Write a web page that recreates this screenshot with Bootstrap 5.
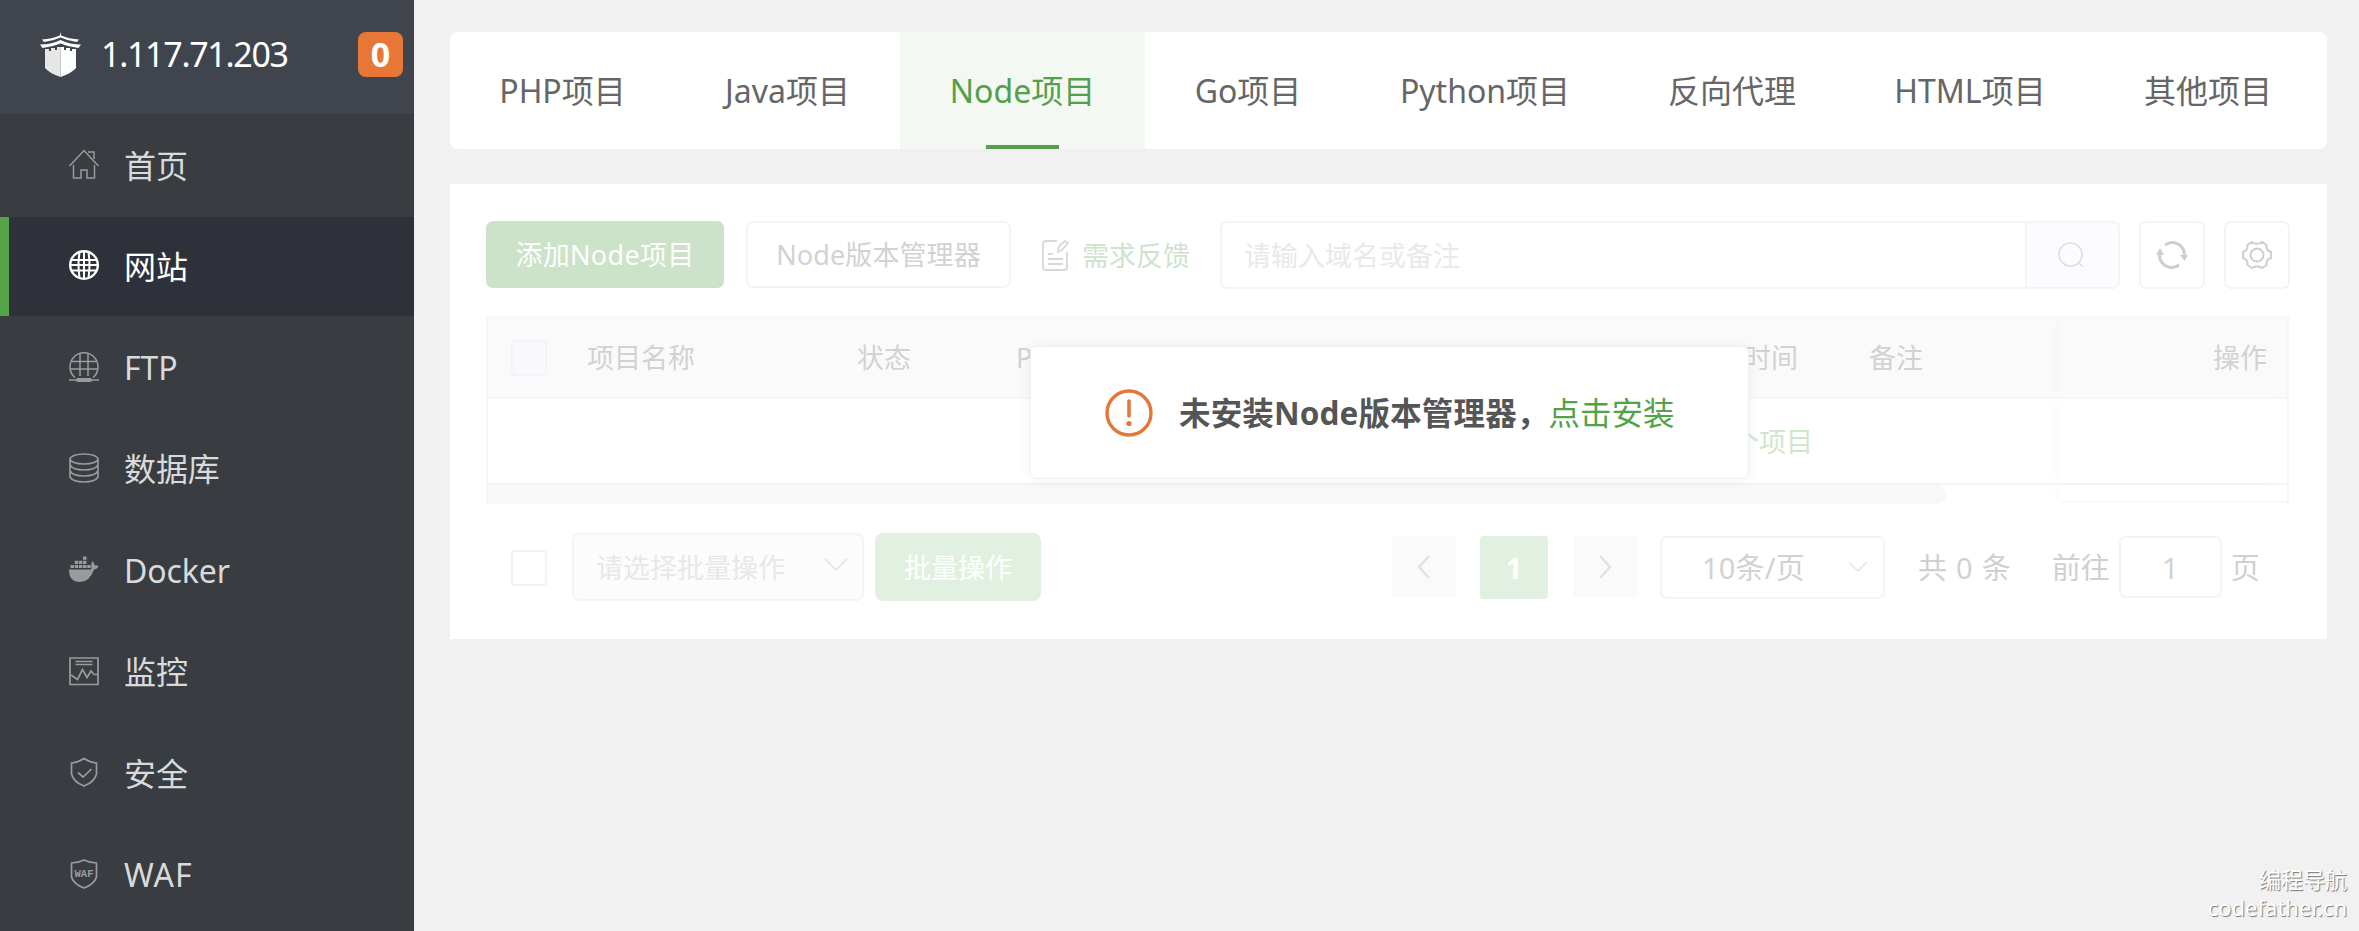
<!DOCTYPE html>
<html lang="zh-CN">
<head>
<meta charset="utf-8">
<title>网站 - Node项目</title>
<link href="https://cdn.jsdelivr.net/npm/bootstrap@5.3.0/dist/css/bootstrap.min.css" rel="stylesheet">
<style>
  body { font-family: "Noto Sans", "Noto Sans CJK SC", sans-serif; background: #f1f1f1; height: 931px; overflow: hidden; font-size: 27px; line-height: 1; }
  svg { display: block; flex: none; fill: none; stroke: currentColor; }
  svg.solid { stroke: none; fill: currentColor; }
  .side { width: 414px; height: 931px; background: #393d41; }
  .side-head { height: 115px; background: #40454d; border-bottom: 1px solid #383c42; padding: 0 11px 6px 40px; }
  .ip { font-size: 34px; letter-spacing: -1.3px; margin-left: 20px; }
  .msg { width: 45px; height: 45px; border-radius: 8px; background: #e87636; font-size: 34px; font-weight: 700; }
  .side .nav-link { height: 101.4px; padding: 0 0 0 69px; gap: 25px; color: #d8dadb; font-size: 32px; letter-spacing: -.1px; }
  .side .nav-link svg { color: #999c9e; margin-bottom: 3px; }
  .side .nav-link.wide { letter-spacing: 1px; }
  .side .nav-link.active { height: 99px; margin: 1px 0; padding-left: 60px; border-left: 9px solid #54a549; background: #2e3139; color: #fff; }
  .side .nav-link.active svg { color: #fff; }
  .main { width: 1877px; margin-left: 36px; padding-top: 32px; }
  .tabs { height: 117px; border-radius: 8px; background: #fff; overflow: hidden; margin-bottom: 35px; }
  .tabs a { color: #666; font-size: 32px; text-decoration: none; padding-top: 1px; }
  .tabs a.on { color: #549f4a; background: #f3f8f3; position: relative; }
  .tabs a.on::after { content: ""; position: absolute; left: 86px; bottom: 0; width: 73px; height: 4px; background: #549f4a; }
  .w225 { width: 225px; } .w226 { width: 226px; } .w245 { width: 245px; } .w206 { width: 206px; }
  .w268 { width: 268px; } .w250 { width: 250px; }
  .panel { position: relative; height: 455px; background: #fff; padding: 37px 36px 0; }
  .tools { height: 68px; }
  .bx { border: 2px solid #f4f4f4; border-radius: 7px; background: #fff; color: #d2d2d2; height: 67px; }
  .add { width: 238px; height: 67px; background: #cce2c9; color: #fff; border-radius: 7px; letter-spacing: .3px; }
  .ver { width: 265px; margin-left: 22px; letter-spacing: .1px; }
  .fb { margin-left: 31px; width: 178px; color: #cfe2cc; gap: 13px; }
  .fb svg { color: #d8d8d8; }
  .search { width: 900px; height: 68px; color: #e9e9e9; padding-left: 22px; overflow: hidden; }
  .search-btn { width: 93px; align-self: stretch; border-left: 2px solid #f4f4f6; background: #fcfcff; color: #dedee0; padding-right: 3px; }
  .sq { width: 66px; height: 68px; margin-left: 19px; color: #cecece; }
  .grid { width: 1803px; height: 188px; margin-top: 27px; border-left: 2px solid #f6f6f6; border-right: 2px solid #f6f6f6; border-top: 2px solid #f7f7f7; }
  .grid-head { height: 81px; background: #fafafa; border-bottom: 2px solid #f7f7f7; color: #d2d2d2; padding-top: 1px; }
  .cb { width: 36px; height: 36px; border: 2px solid #f3f3f3; border-radius: 4px; background: #fff; flex: none; }
  .grid-head .cb { background: #f8f8fd; border-color: #f4f4f8; margin: 0 40px 0 23px; }
  .c1 { width: 270px; } .c2 { width: 159px; } .c3 { width: 728px; } .c4 { width: 125px; } .c5 { width: 190px; }
  .fixcol { width: 228px; height: 100%; padding-right: 20px; box-shadow: -7px 0 9px -3px rgba(0,0,0,.02); }
  .grid-row { height: 87px; border-bottom: 2px solid #f4f4f4; color: #d0e6cc; padding-top: 1px; }
  .empty { width: 1571px; text-align: right; padding-right: 246px; }
  .bar { width: 1458px; height: 19px; border-radius: 0 9px 9px 0; background: #f8f8f8; }
  .bar-r { width: 228px; height: 18px; border-bottom: 2px solid #fafafa; }
  .foot { height: 70px; margin-top: 28px; padding-left: 25px; color: #d0d0d0; font-size: 29px; }
  .foot > .cb { margin-top: 2px; }
  .sel { width: 292px; height: 68px; margin-left: 25px; background: #fcfcfc; color: #e8e8e8; padding: 0 14px 0 22px; font-size: 27px; }
  .batch { width: 166px; height: 68px; border-radius: 8px; margin-left: 11px; background: #e2f0e1; color: #fff; font-size: 27px; }
  .page-set { margin-left: 351px; }
  .pg { width: 64px; height: 62px; background: #fafafa; border-radius: 3px; color: #dfdfdf; }
  .pg.on { width: 68px; height: 63px; background: #e2f0e1; color: #fff; font-weight: 700; margin: 0 25px 0 24px; }
  .size { width: 225px; height: 63px; margin-left: 23px; padding: 0 15px 0 40px; letter-spacing: .2px; }
  .size svg { color: #e4e4e4; }
  .jump { width: 103px; height: 62px; margin: 0 9px; }
  .total { margin-left: 33px; word-spacing: 1.5px; }
  .goto { margin-left: 41px; }
  .tip { position: absolute; left: 580px; top: 162px; width: 719px; height: 133px; background: #fff; border: 1px solid #f0f0f0; border-radius: 6px; box-shadow: 0 1px 14px rgba(0,0,0,.06); padding-left: 74px; font-size: 31.5px; color: #555; }
  .tip svg { color: #e5763a; }
  .tip a { color: #52a346; text-decoration: none; }
  .tip-text { margin-left: 26px; letter-spacing: .15px; }
  .mark-note { position: absolute; right: 12px; bottom: 10px; text-align: right; color: #fff; font-size: 22px; line-height: 28px; text-shadow: 1px 1px 1px #777; }
</style>
</head>
<body>
<div class="d-flex">
  <aside class="side flex-shrink-0">
    <div class="side-head d-flex align-items-center text-white">
      <svg class="solid" width="41" height="45" viewBox="0 0 41 45"><path d="M19.800 3.500 20.500 0l.7 3.500Q29 7 39 7.500L37 10Q28 9 20.500 5.500 13 9 4 10L2 7.500q10-.5 17.800-4Z"/><path d="M20.500 8Q30 12.500 41 12.500L38.500 16q-10-1-18-4.500Q12.500 15 2.500 16L0 12.500Q11 12.500 20.500 8Z"/><path fill="#e6e6e6" d="M5 17h4v2h2v-3h4v2h2v-3h3.500v30Q9 41 5 36Z"/><path d="M20.500 15H24v3h2v-2h4v3h2v-2h4v19q-4 5-15.500 9Z"/></svg>
      <span class="ip">1.117.71.203</span>
      <span class="msg d-flex align-items-center justify-content-center ms-auto">0</span>
    </div>
    <nav class="nav flex-column flex-nowrap">
      <a class="nav-link d-flex align-items-center" href="#"><svg width="30" height="30" viewBox="0 0 30 30" stroke-width="1.500"><path d="M.5 17 15 1.500 29.500 17M19 3h6v7M4.500 16v13H12v-8h6v8h7.500V16"/></svg>首页</a>
      <a class="nav-link active d-flex align-items-center" href="#"><svg width="30" height="30" viewBox="0 0 30 30" stroke-width="2.400"><circle cx="15" cy="15" r="13.800"/><path d="M10.500 2.500Q8.500 15 10.500 27.500M19.500 2.500Q21.500 15 19.500 27.500M15 1v28M2 10h26M1 15h28M2 20.500h26" stroke-width="2"/></svg>网站</a>
      <a class="nav-link d-flex align-items-center" href="#"><svg width="30" height="30" viewBox="0 0 30 30" stroke-width="1.500"><path d="M6 25.500A14 14 0 1 1 24 25.500M2.500 9.500h25M1 17h28M11 2v22M19 2v22M0 28h30"/><path d="M9 28h12" stroke-width="4" stroke-linecap="round"/></svg>FTP</a>
      <a class="nav-link d-flex align-items-center" href="#"><svg width="30" height="30" viewBox="0 0 30 30" stroke-width="1.600"><ellipse cx="15" cy="6" rx="14" ry="5"/><path d="M1 6v18q3 5 14 5t14-5V6M1 12q3 5 14 5t14-5M1 18q3 5 14 5t14-5"/></svg>数据库</a>
      <a class="nav-link d-flex align-items-center" href="#"><svg class="solid" width="30" height="30" viewBox="0 0 30 30"><path d="M0 15.500h22q1-1 .2-4l.8-4.500q2.500 2 3 4.500 2-.5 3.500.5-1 3-4.500 3.500Q20.500 28 11 28 0 28 0 15.500ZM1.500 11h3.500v3H1.500zM5.700 11h3.500v3H5.700zM9.900 11h3.500v3H9.900zM14 11h3.500v3H14zM18.200 11h3.500v3h-3.500zM5.700 6.800h3.500v3.200H5.700zM9.900 6.800h3.500v3.200H9.900zM14 6.800h3.500v3.200H14zM14 2.500h3.500v3.200H14z"/></svg>Docker</a>
      <a class="nav-link d-flex align-items-center" href="#"><svg width="30" height="30" viewBox="0 0 30 30" stroke-width="1.700"><path d="M1 2h28v26.500H1zM6.500 5.500h17M6.500 8.500h17M2 19l6.500 4.500 5-10 4.500 8 4-6.500 3 3.500h4"/></svg>监控</a>
      <a class="nav-link d-flex align-items-center" href="#"><svg width="30" height="30" viewBox="0 0 30 30" stroke-width="1.700"><path d="M15 1.500Q21 5.500 27.500 6v11q-2 8-12.500 12Q4.500 25 2.500 17V6Q9 5.500 15 1.500ZM9 15.500l5 4.500 8.500-8"/></svg>安全</a>
      <a class="nav-link wide d-flex align-items-center" href="#"><svg width="30" height="30" viewBox="0 0 30 30" stroke-width="1.700"><path d="M15 1Q21 4 27.500 4v14q-2 7-12.500 11Q4.500 25 2.500 18V4Q9 4 15 1Z"/><text x="5.500" y="18" font-size="10.500" font-weight="700" letter-spacing="0" font-family="Liberation Mono, monospace" textLength="19" lengthAdjust="spacingAndGlyphs" fill="currentColor" stroke="none">WAF</text></svg>WAF</a>
    </nav>
  </aside>

  <main class="main flex-shrink-0">
    <div class="tabs d-flex">
      <a class="w225 d-flex align-items-center justify-content-center" href="#">PHP项目</a>
      <a class="w225 d-flex align-items-center justify-content-center" href="#">Java项目</a>
      <a class="w245 on d-flex align-items-center justify-content-center" href="#">Node项目</a>
      <a class="w206 d-flex align-items-center justify-content-center" href="#">Go项目</a>
      <a class="w268 d-flex align-items-center justify-content-center" href="#">Python项目</a>
      <a class="w226 d-flex align-items-center justify-content-center" href="#">反向代理</a>
      <a class="w250 d-flex align-items-center justify-content-center" href="#">HTML项目</a>
      <a class="w226 d-flex align-items-center justify-content-center" href="#">其他项目</a>
    </div>

    <section class="panel">
      <div class="tools d-flex align-items-start">
        <div class="add d-flex align-items-center justify-content-center">添加Node项目</div>
        <div class="bx ver d-flex align-items-center justify-content-center">Node版本管理器</div>
        <div class="fb d-flex align-items-center align-self-center"><svg width="27" height="31" viewBox="0 0 27 31" stroke-width="1.800"><path d="M15 1H4Q1 1 1 4v23q0 3 3 3h18q3 0 3-3V12M6 14h5M6 19h15M6 24h15M16 10l1-4 6-5 3 2-6 7-4 2Z"/></svg>需求反馈</div>
        <div class="bx search d-flex align-items-center"><span class="me-auto">请输入域名或备注</span>
          <span class="search-btn d-flex align-items-center justify-content-center"><svg width="26" height="26" viewBox="0 0 26 26" stroke-width="1.600"><circle cx="12.500" cy="12.500" r="11.500"/><path d="m20.500 20.500 4.500 4.500"/></svg></span></div>
        <div class="bx sq d-flex align-items-center justify-content-center"><svg width="32" height="28" viewBox="0 0 32 28"><path stroke-width="3" d="M9 4Q13 1.500 16 1.500A12.500 12.500 0 0 1 28.500 15M23 24Q20 26.500 16 26.500A12.500 12.500 0 0 1 3.500 13"/><path fill="currentColor" stroke="none" d="m24 14 8 0-3.500 6zM0 14h8L4 7z"/></svg></div>
        <div class="bx sq d-flex align-items-center justify-content-center"><svg width="30" height="30" viewBox="0 0 30 30" stroke-width="2"><circle cx="15" cy="15" r="6.500"/><path d="M10 2q5 3.500 10 0l4.500 3q-.5 5.500 4.500 7v6q-5 1.500-4.500 7L20 28q-5-3.500-10 0l-4.500-3Q6 19.500 1 18v-6q5-1.500 4.500-7Z"/></svg></div>
      </div>

      <div class="grid d-flex flex-column">
        <div class="grid-head d-flex align-items-center">
          <span class="cb"></span><span class="c1">项目名称</span><span class="c2">状态</span><span class="c3">P</span><span class="c4">时间</span><span class="c5">备注</span>
          <span class="fixcol d-flex align-items-center justify-content-end">操作</span>
        </div>
        <div class="grid-row d-flex align-items-center"><span class="empty">个项目</span><span class="fixcol"></span></div>
        <div class="d-flex justify-content-between"><div class="bar"></div><div class="bar-r fixcol"></div></div>
      </div>

      <div class="foot d-flex align-items-center">
        <span class="cb"></span>
        <div class="bx sel d-flex align-items-center justify-content-between">请选择批量操作<svg width="24" height="30" viewBox="0 0 24 30" stroke-width="1.800"><path d="m1 7 11 11L23 7"/></svg></div>
        <div class="batch d-flex align-items-center justify-content-center">批量操作</div>
        <div class="d-flex align-items-center flex-nowrap text-nowrap page-set">
          <span class="pg d-flex align-items-center justify-content-center"><svg width="12" height="24" viewBox="0 0 12 24" stroke-width="2"><path d="M11 1 1 12l10 11"/></svg></span>
          <span class="pg on d-flex align-items-center justify-content-center">1</span>
          <span class="pg d-flex align-items-center justify-content-center"><svg width="12" height="24" viewBox="0 0 12 24" stroke-width="2"><path d="m1 1 10 11L1 23"/></svg></span>
          <span class="bx size d-flex align-items-center justify-content-between">10条/页<svg width="20" height="12" viewBox="0 0 20 12" stroke-width="1.500"><path d="m1 1 9 9 9-9"/></svg></span>
          <span class="total">共 0 条</span>
          <span class="goto">前往</span>
          <span class="bx jump d-flex align-items-center justify-content-center">1</span>
          <span>页</span>
        </div>
      </div>

      <div class="tip d-flex align-items-center">
        <svg width="48" height="48" viewBox="0 0 48 48" stroke-width="3.400"><circle cx="24" cy="24" r="22"/><path stroke-linecap="round" stroke-width="3.600" d="M24 12v15"/><circle cx="24" cy="34.500" r="2.600" fill="currentColor" stroke="none"/></svg>
        <b class="tip-text">未安装Node版本管理器，</b><a href="#">点击安装</a>
      </div>
    </section>
  </main>
</div>
<div class="mark-note">编程导航<br>codefather.cn</div>
<script src="https://cdn.jsdelivr.net/npm/bootstrap@5.3.0/dist/js/bootstrap.bundle.min.js"></script>
</body>
</html>
